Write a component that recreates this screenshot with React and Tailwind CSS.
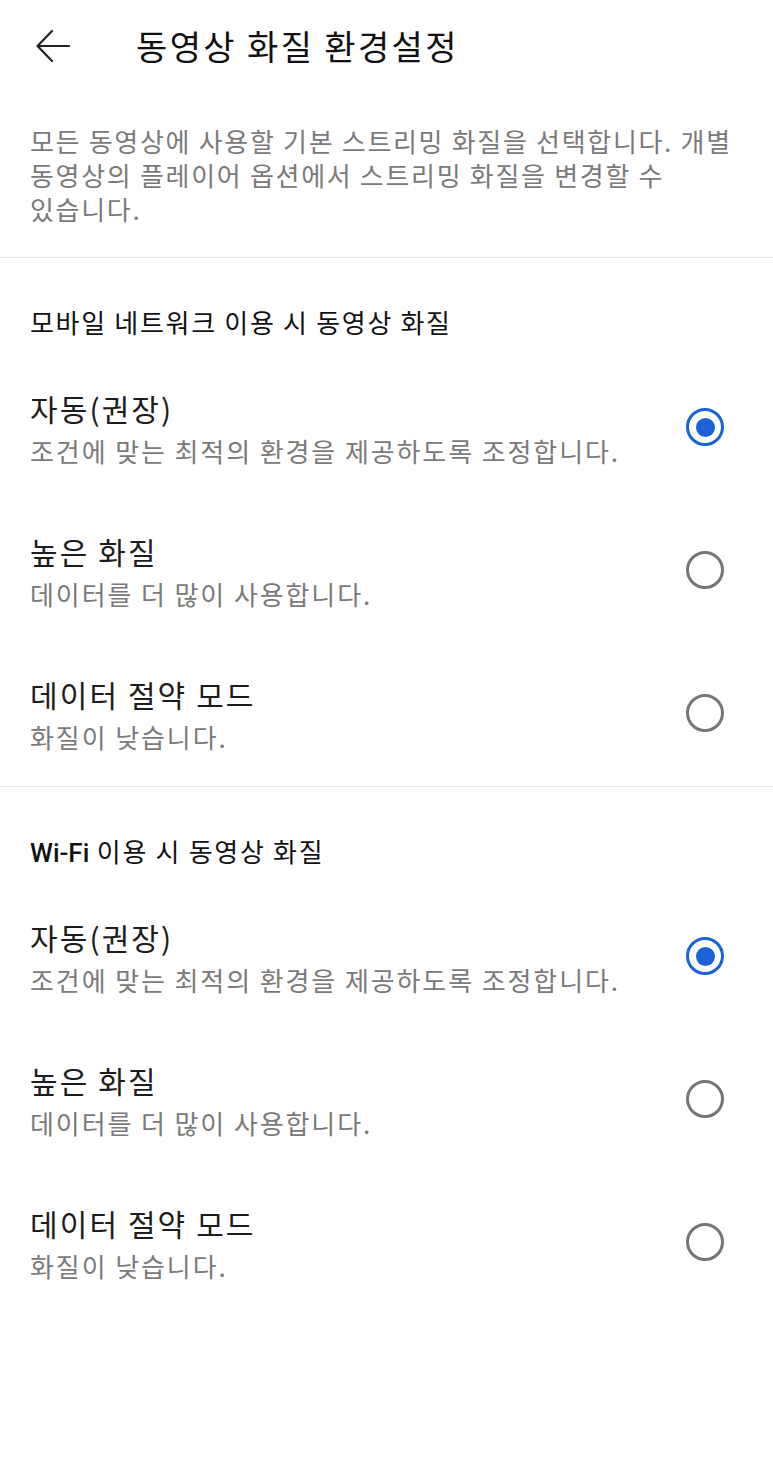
import { useState } from 'react';

const OPTIONS = [
  { id: 'auto', title: '자동(권장)', desc: '조건에 맞는 최적의 환경을 제공하도록 조정합니다.' },
  { id: 'high', title: '높은 화질', desc: '데이터를 더 많이 사용합니다.' },
  { id: 'saver', title: '데이터 절약 모드', desc: '화질이 낮습니다.' },
];

function Radio({ checked }) {
  return (
    <span className={`mb-[3px] flex items-center justify-center w-[38px] h-[38px] rounded-full border-[3.5px] ${checked ? 'border-[#1a62d6]' : 'border-[#767676]'}`}>
      {checked && <span className="w-[19px] h-[19px] rounded-full bg-[#1a62d6]" />}
    </span>
  );
}

function Section({ label, value, onChange, border }) {
  return (
    <div className={border ? 'border-b border-[#e6e6e6]' : ''}>
      <div className="pt-[47px] px-[30px]">
        <h2 className="h-[34px] text-[26px] leading-[34px] tracking-[0.065em] text-[#111]">{label}</h2>
      </div>
      <div className="mt-[18px]">
        {OPTIONS.map(o => (
          <div key={o.id} className="h-[143px] flex items-center justify-between pl-[30px] pr-[49px] cursor-pointer"
            onClick={() => onChange(o.id)}>
            <div>
              <div className="text-[30px] leading-[38px] tracking-[0.07em] text-[#1c1c1c]">{o.title}</div>
              <div className="mt-[7px] text-[26px] leading-[34px] tracking-[0.073em] text-[#7a7a7a]">{o.desc}</div>
            </div>
            <Radio checked={value === o.id} />
          </div>
        ))}
      </div>
    </div>
  );
}

export default function App() {
  const [mobile, setMobile] = useState('auto');
  const [wifi, setWifi] = useState('auto');

  return (
    <div className="min-h-[1459px] w-[773px] bg-white" style={{ fontFamily: '"Noto Sans CJK KR", Roboto, sans-serif' }}>
      <div className="h-[92px] flex items-center">
        <svg className="ml-[35px]" width="36" height="36" viewBox="0 0 36 36" fill="none" stroke="#222" strokeWidth="2.2" strokeLinecap="round" strokeLinejoin="round">
          <path d="M34 18H3" />
          <path d="M17 3L2.5 18L17 33" />
        </svg>
        <h1 className="ml-[65px] text-[34px] leading-[44px] tracking-[0.07em] text-[#111]">동영상 화질 환경설정</h1>
      </div>

      <p className="pt-[32px] pb-[31px] px-[30px] text-[26px] leading-[34px] tracking-[0.065em] text-[#7a7a7a] border-b border-[#e6e6e6] whitespace-nowrap">
        모든 동영상에 사용할 기본 스트리밍 화질을 선택합니다. 개별<br />
        동영상의 플레이어 옵션에서 스트리밍 화질을 변경할 수<br />
        있습니다.
      </p>

      <Section label="모바일 네트워크 이용 시 동영상 화질" value={mobile} onChange={setMobile} border />
      <Section label={<><span className="font-medium tracking-normal" style={{ fontFamily: 'Roboto, sans-serif' }}>Wi-Fi</span> 이용 시 동영상 화질</>} value={wifi} onChange={setWifi} />
    </div>
  );
}
